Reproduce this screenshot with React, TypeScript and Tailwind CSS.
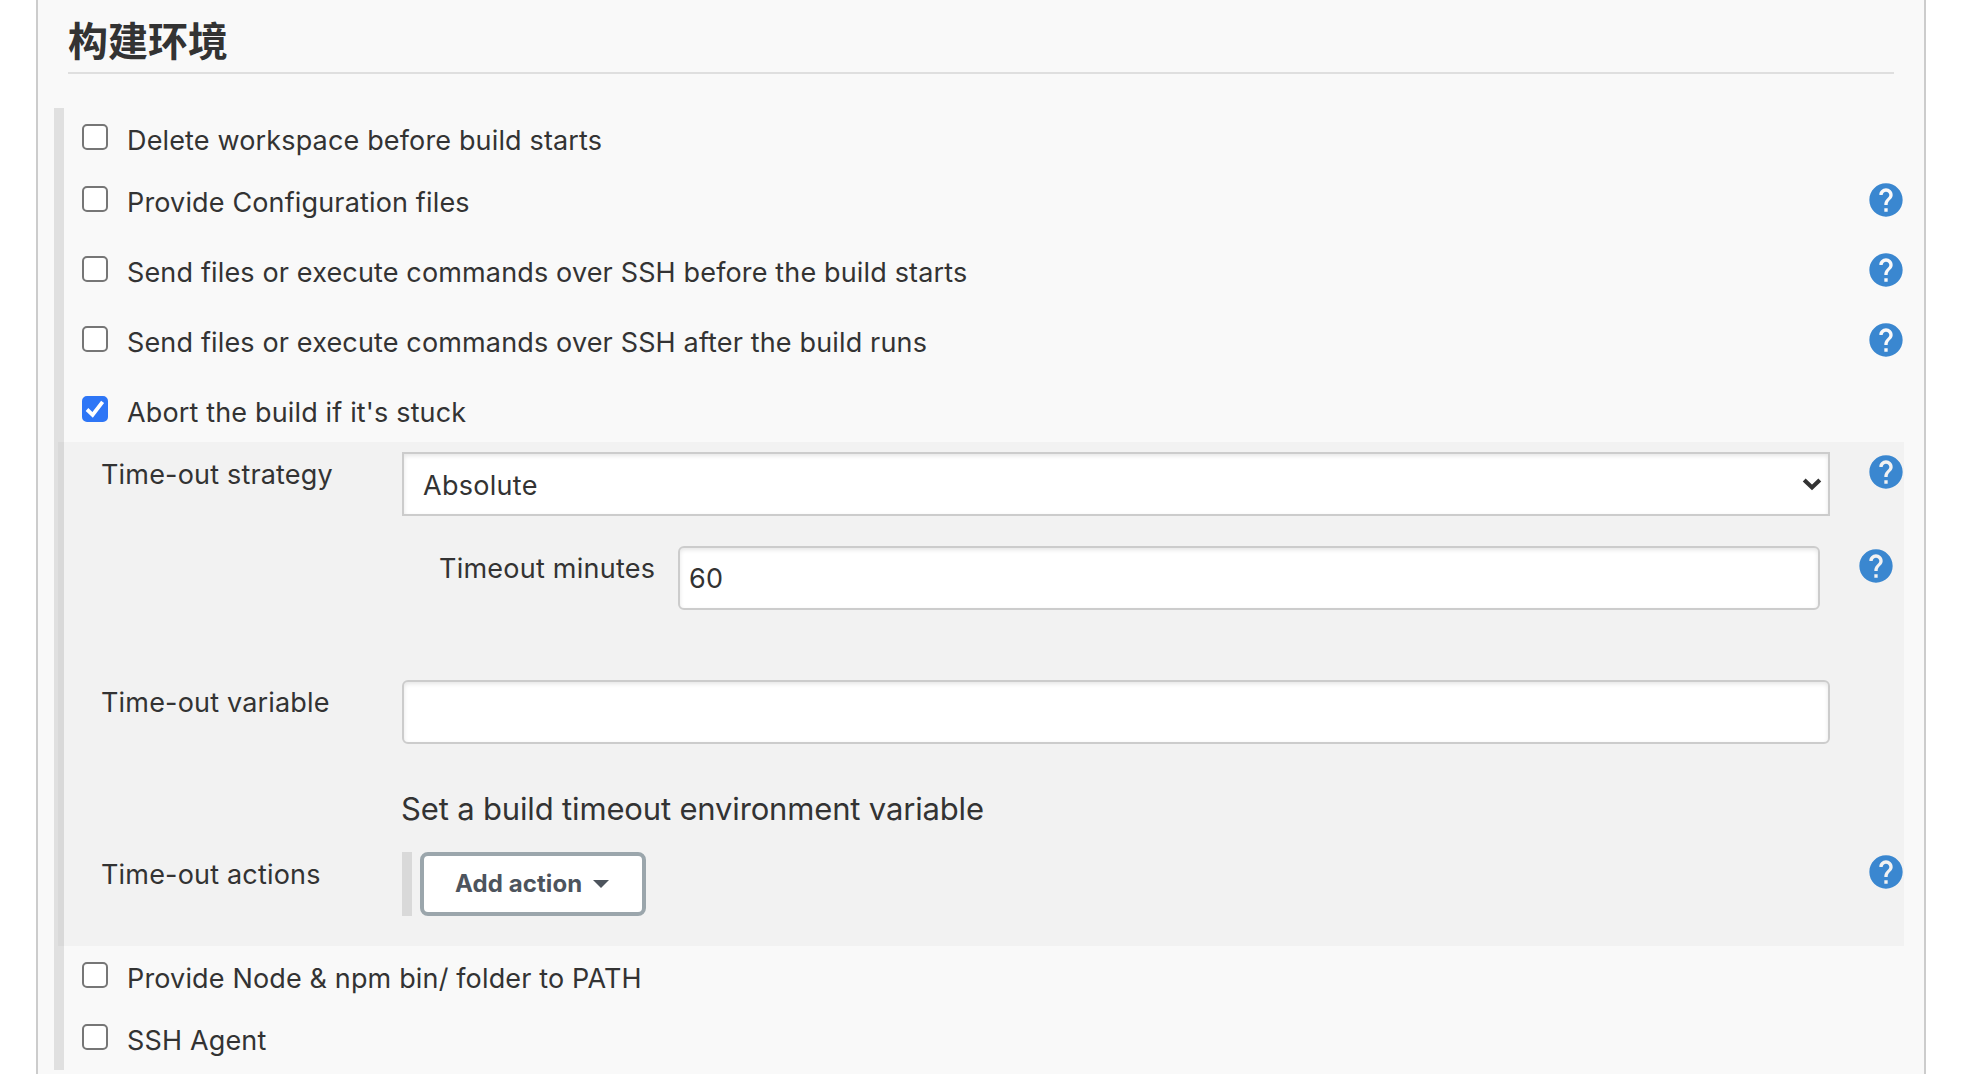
import { useState, type ReactNode } from "react";

function HelpIcon({ className = "" }: { className?: string }) {
  return (
    <button type="button" aria-label="Help" className={`block size-10 shrink-0 ${className}`}>
      <svg viewBox="0 0 24 24" className="size-10" fill="#3a87d0">
        <path d="M12 2C6.48 2 2 6.48 2 12s4.48 10 10 10 10-4.48 10-10S17.52 2 12 2zm1 17h-2v-2h2v2zm2.07-7.75l-.9.92C13.45 12.9 13 13.5 13 15h-2v-.5c0-1.1.45-2.1 1.17-2.83l1.24-1.26c.37-.36.59-.86.59-1.41 0-1.1-.9-2-2-2s-2 .9-2 2H8c0-2.21 1.79-4 4-4s4 1.79 4 4c0 .88-.36 1.68-.93 2.25z" />
      </svg>
    </button>
  );
}

function Checkbox({ checked, onChange }: { checked: boolean; onChange: () => void }) {
  return (
    <span className="grid size-[26px] shrink-0">
      <input
        type="checkbox"
        checked={checked}
        onChange={onChange}
        className="col-start-1 row-start-1 size-[26px] appearance-none rounded-[5px] border-2 border-[#767676] bg-white checked:border-[#2e76f6] checked:bg-[#2e76f6]"
      />
      {checked && (
        <svg viewBox="0 0 26 26" className="pointer-events-none col-start-1 row-start-1 size-[26px]" fill="none" stroke="#fff" strokeWidth="3.8">
          <path d="M5 13.5 L10.6 18.8 L20.6 5.8" />
        </svg>
      )}
    </span>
  );
}

function OptionRow({ label, help = false, tall = false, defaultChecked = false }: { label: string; help?: boolean; tall?: boolean; defaultChecked?: boolean }) {
  const [checked, setChecked] = useState(defaultChecked);
  return (
    <div className={`flex items-start pt-4 pl-[18px] ${tall ? "h-[70px]" : "h-[62px]"}`}>
      <label className="flex grow items-start gap-[19px]">
        <Checkbox checked={checked} onChange={() => setChecked(!checked)} />
        <span className="pt-px text-[27px] leading-8 tracking-[0.15px]">{label}</span>
      </label>
      {help && <HelpIcon className="-mt-[6px] -mr-[2px]" />}
    </div>
  );
}

function Field({ label, help = false, children }: { label: string; help?: boolean; children: ReactNode }) {
  return (
    <div className="flex h-16 items-start">
      <div className="w-[301px] shrink-0 pt-[7px] text-[27px] leading-8 tracking-[0.18px]">{label}</div>
      <div className="flex w-[1428px] shrink-0">{children}</div>
      {help && <HelpIcon className="ml-9" />}
    </div>
  );
}

export default function App() {
  return (
    <div className="h-[1074px] overflow-hidden bg-white px-9 font-['Inter','Noto_Sans_CJK_SC',sans-serif] text-[#333]">
      <main className="mr-[2px] h-full border-x-2 border-[#ccc] bg-[#f9f9f9]">
        <h2 className="mr-[30px] ml-[30px] h-[74px] border-b-2 border-[#dfdfdf] pt-[19px] font-['Noto_Sans_CJK_SC',sans-serif] text-[40px] leading-10 font-bold">
          构建环境
        </h2>

        <section className="mt-[34px] mr-5 ml-4 border-l-10 border-[#e0e0e0]">
          <OptionRow label="Delete workspace before build starts" />
          <OptionRow label="Provide Configuration files" tall help />
          <OptionRow label="Send files or execute commands over SSH before the build starts" tall help />
          <OptionRow label="Send files or execute commands over SSH after the build runs" tall help />
          <OptionRow label="Abort the build if it's stuck" defaultChecked />

          <div className="-ml-[6px] h-[504px] bg-[rgba(0,0,0,0.027)] pt-[10px] pl-[43px]">
            <Field label="Time-out strategy" help>
              <div className="grid w-full">
                <select className="col-start-1 row-start-1 h-16 w-full appearance-none rounded-none border-2 border-[#ccc] bg-white pt-[5px] pl-[19px] text-[27px] tracking-[0.28px] shadow-[inset_0_2px_4px_rgba(0,0,0,0.1)]">
                  <option>Absolute</option>
                </select>
                <svg viewBox="0 0 20 14" className="pointer-events-none col-start-1 row-start-1 mr-2 h-[14px] w-5 self-center justify-self-end" fill="none" stroke="#333" strokeWidth="4.2">
                  <path d="M2.2 3 L10 10.4 L17.8 3" />
                </svg>
              </div>
            </Field>

            <div className="mt-[30px] flex h-16 items-start pl-[338px]">
              <label htmlFor="minutes" className="w-[239px] pt-[7px] text-[27px] leading-8 tracking-[0.24px]">
                Timeout minutes
              </label>
              <input
                id="minutes"
                defaultValue="60"
                className="h-16 w-[1142px] rounded-[6px] border-2 border-[#ccc] bg-white pl-[9px] text-[27px] tracking-[0.28px] shadow-[inset_0_2px_4px_rgba(0,0,0,0.1)]"
              />
              <HelpIcon className="ml-9" />
            </div>

            <div className="mt-[70px]">
              <Field label="Time-out variable">
                <input className="h-16 w-full rounded-[6px] border-2 border-[#ccc] bg-white pl-[9px] text-[27px] shadow-[inset_0_2px_4px_rgba(0,0,0,0.1)]" />
              </Field>
            </div>
            <p className="mt-[45px] mb-[23px] ml-[300px] text-[31px] leading-10 tracking-[-0.16px]">
              Set a build timeout environment variable
            </p>

            <Field label="Time-out actions" help>
              <div className="flex border-l-10 border-[#d9d9d9] pl-2">
                <button
                  type="button"
                  className="flex h-16 w-[226px] items-center gap-[11px] rounded-[8px] border-4 border-[#9ba6ac] bg-white pl-[31px] text-[24px] font-bold tracking-[0.1px] text-[#4d545d]"
                >
                  <span className="-mt-px">Add action</span>
                  <svg viewBox="0 0 16 8" className="h-2 w-4" fill="#4d545d">
                    <path d="M0 0h16L8 8z" />
                  </svg>
                </button>
              </div>
            </Field>
          </div>

          <OptionRow label="Provide Node & npm bin/ folder to PATH" />
          <OptionRow label="SSH Agent" />
        </section>
      </main>
    </div>
  );
}
